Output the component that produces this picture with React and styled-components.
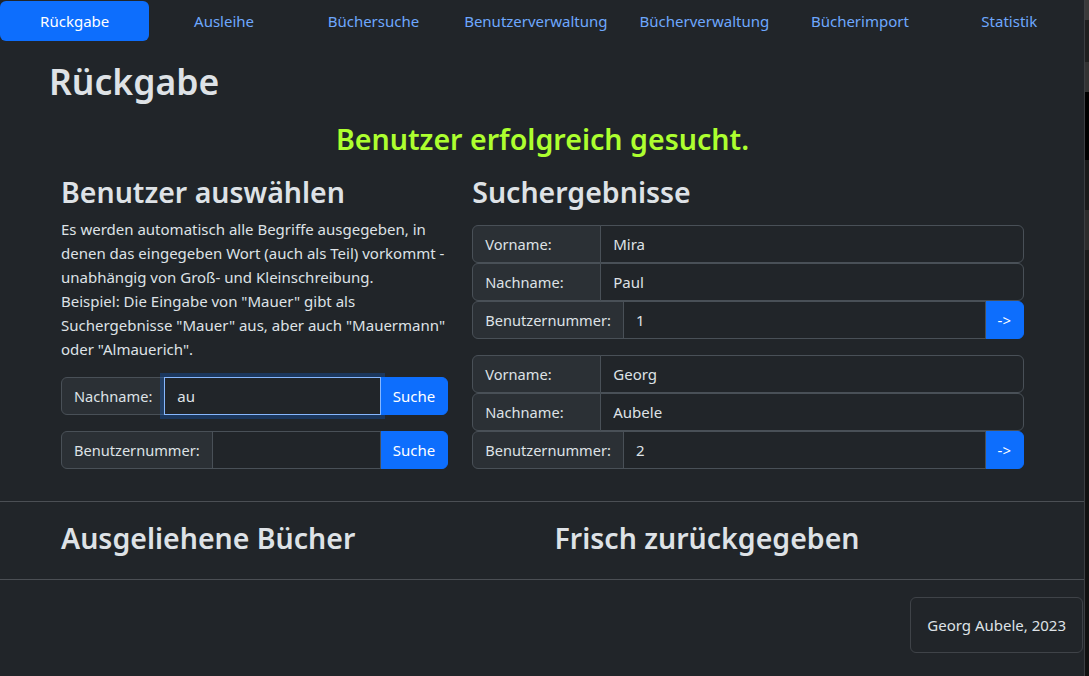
import React from 'react';
import styled, { createGlobalStyle } from 'styled-components';

const GlobalStyle = createGlobalStyle`
  html, body {
    margin: 0;
    padding: 0;
    background: #212529;
  }
  body {
    font-family: "Noto Sans", "Open Sans", sans-serif;
    font-size: 15px;
    line-height: 24px;
    color: #dee2e6;
  }
  * {
    box-sizing: border-box;
  }
`;

const Screen = styled.div`
  display: flex;
  width: 1089px;
  height: 676px;
  overflow: hidden;
`;

const Page = styled.div`
  flex: none;
  width: 1084px;
  padding-top: 1px;
`;

// what shows of the window behind, on the right edge
const Edge = styled.div`
  flex: 1;
  border-left: 1px solid #3c3f43;
  background: linear-gradient(
    #3a3a3a 0 20px,
    #1f1f1f 20px 62px,
    #333 62px 92px,
    #000 92px 160px,
    #1a1a1a 160px 210px,
    #2c2c2c 210px 250px,
    #1b1b1b 250px 300px,
    #111 300px
  );
`;

const Nav = styled.nav`
  display: flex;
`;

const NavItem = styled.a`
  flex: 1 1 0;
  padding: 8px 16px;
  text-align: center;
  white-space: nowrap;
  text-decoration: none;
  border-radius: 6px;
  color: ${p => (p.$active ? '#fff' : '#6ea8fe')};
  background: ${p => (p.$active ? '#0d6efd' : 'transparent')};
`;

const Main = styled.main`
  padding: 0 48px 16px 49px;
`;

const Title = styled.h1`
  margin: 17px 0 0;
  font-size: 35.5px;
  font-weight: 600;
  line-height: 46px;
`;

const Message = styled.h2`
  margin: 16px 0 19px;
  font-size: 28.6px;
  font-weight: 600;
  line-height: 37px;
  text-align: center;
  color: #adff2f;
`;

const Row = styled.div`
  display: grid;
  grid-template-columns: ${p => p.$cols || 'minmax(0, 5fr) minmax(0, 7fr)'};
`;

const Col = styled.div`
  min-width: 0;
  padding: 0 12px;
  padding-bottom: ${p => p.$pb || 0}px;
`;

const Heading = styled.h3`
  margin: 0 0 8px;
  font-size: 28.5px;
  font-weight: 600;
  line-height: 33px;
`;

const Hint = styled.p`
  margin: 0 0 16px;
  white-space: nowrap;
`;

const InputGroup = styled.div`
  display: flex;
  height: 38px;
  margin-bottom: ${p => (p.$mb === undefined ? 16 : p.$mb)}px;
`;

const Addon = styled.span`
  display: flex;
  align-items: center;
  flex: none;
  min-width: ${p => (p.$w ? `${p.$w}px` : 'auto')};
  padding: 6px 12px;
  font-size: 14.6px;
  white-space: nowrap;
  background: #2b3035;
  border: 1px solid #495057;
  border-radius: 6px 0 0 6px;
`;

const Field = styled.input`
  position: relative;
  flex: 1;
  min-width: 0;
  margin-left: -1px;
  padding: 6px 12px;
  font: inherit;
  color: #dee2e6;
  background: #212529;
  border: 1px solid ${p => (p.$focused ? '#86b7fe' : '#495057')};
  border-radius: ${p => (p.$end ? '0 6px 6px 0' : '0')};
  outline: none;
  z-index: ${p => (p.$focused ? 2 : 0)};
  box-shadow: ${p => (p.$focused ? '0 0 0 4px rgba(13, 110, 253, 0.25)' : 'none')};
`;

const Button = styled.button`
  flex: none;
  margin-left: -1px;
  padding: 6px 12px;
  font: inherit;
  color: #fff;
  background: #0d6efd;
  border: 1px solid #0d6efd;
  border-radius: 0 6px 6px 0;
`;

const Results = styled.div`
  padding-top: 8px;
`;

const Result = styled.div`
  margin-bottom: 16px;
`;

const Rule = styled.hr`
  margin: 0;
  border: 0;
  border-top: 1px solid #4b4f54;
`;

const Lower = styled.section`
  padding: 20px 48px 16px 49px;
`;

const FooterRow = styled.footer`
  display: flex;
  justify-content: flex-end;
  padding: 17px 1px 0 0;
`;

const Credit = styled.div`
  display: flex;
  align-items: center;
  height: 56px;
  padding: 0 16px;
  border: 1px solid #3f4348;
  border-radius: 6px;
`;

const tabs = [
  'Rückgabe',
  'Ausleihe',
  'Büchersuche',
  'Benutzerverwaltung',
  'Bücherverwaltung',
  'Bücherimport',
  'Statistik',
];

const users = [
  { id: 1, first: 'Mira', last: 'Paul' },
  { id: 2, first: 'Georg', last: 'Aubele' },
];

const UserResult = ({ user }) => (
  <Result>
    <InputGroup $mb={0}>
      <Addon $w={129}>Vorname:</Addon>
      <Field $end readOnly value={user.first} />
    </InputGroup>
    <InputGroup $mb={0}>
      <Addon $w={129}>Nachname:</Addon>
      <Field $end readOnly value={user.last} />
    </InputGroup>
    <InputGroup $mb={0}>
      <Addon>Benutzernummer:</Addon>
      <Field readOnly value={user.id} />
      <Button>-&gt;</Button>
    </InputGroup>
  </Result>
);

export default function App() {
  return (
    <Screen>
      <GlobalStyle />
      <Page>
        <Nav>
          {tabs.map((t, i) => (
            <NavItem key={t} href="#" $active={i === 0}>
              {t}
            </NavItem>
          ))}
        </Nav>

        <Main>
          <Title>Rückgabe</Title>
          <Message>Benutzer erfolgreich gesucht.</Message>
          <Row>
            <Col $pb={16}>
              <Heading>Benutzer auswählen</Heading>
              <Hint>
                Es werden automatisch alle Begriffe ausgegeben, in
                <br />
                denen das eingegeben Wort (auch als Teil) vorkommt -
                <br />
                unabhängig von Groß- und Kleinschreibung.
                <br />
                Beispiel: Die Eingabe von "Mauer" gibt als
                <br />
                Suchergebnisse "Mauer" aus, aber auch "Mauermann"
                <br />
                oder "Almauerich".
              </Hint>
              <InputGroup>
                <Addon>Nachname:</Addon>
                <Field $focused defaultValue="au" />
                <Button>Suche</Button>
              </InputGroup>
              <InputGroup $mb={0}>
                <Addon>Benutzernummer:</Addon>
                <Field />
                <Button>Suche</Button>
              </InputGroup>
            </Col>
            <Col>
              <Heading>Suchergebnisse</Heading>
              <Results>
                {users.map(u => (
                  <UserResult key={u.id} user={u} />
                ))}
              </Results>
            </Col>
          </Row>
        </Main>

        <Rule />
        <Lower>
          <Row $cols="1fr 1fr">
            <Col>
              <Heading>Ausgeliehene Bücher</Heading>
            </Col>
            <Col>
              <Heading>Frisch zurückgegeben</Heading>
            </Col>
          </Row>
        </Lower>
        <Rule />

        <FooterRow>
          <Credit>Georg Aubele, 2023</Credit>
        </FooterRow>
      </Page>
      <Edge />
    </Screen>
  );
}
